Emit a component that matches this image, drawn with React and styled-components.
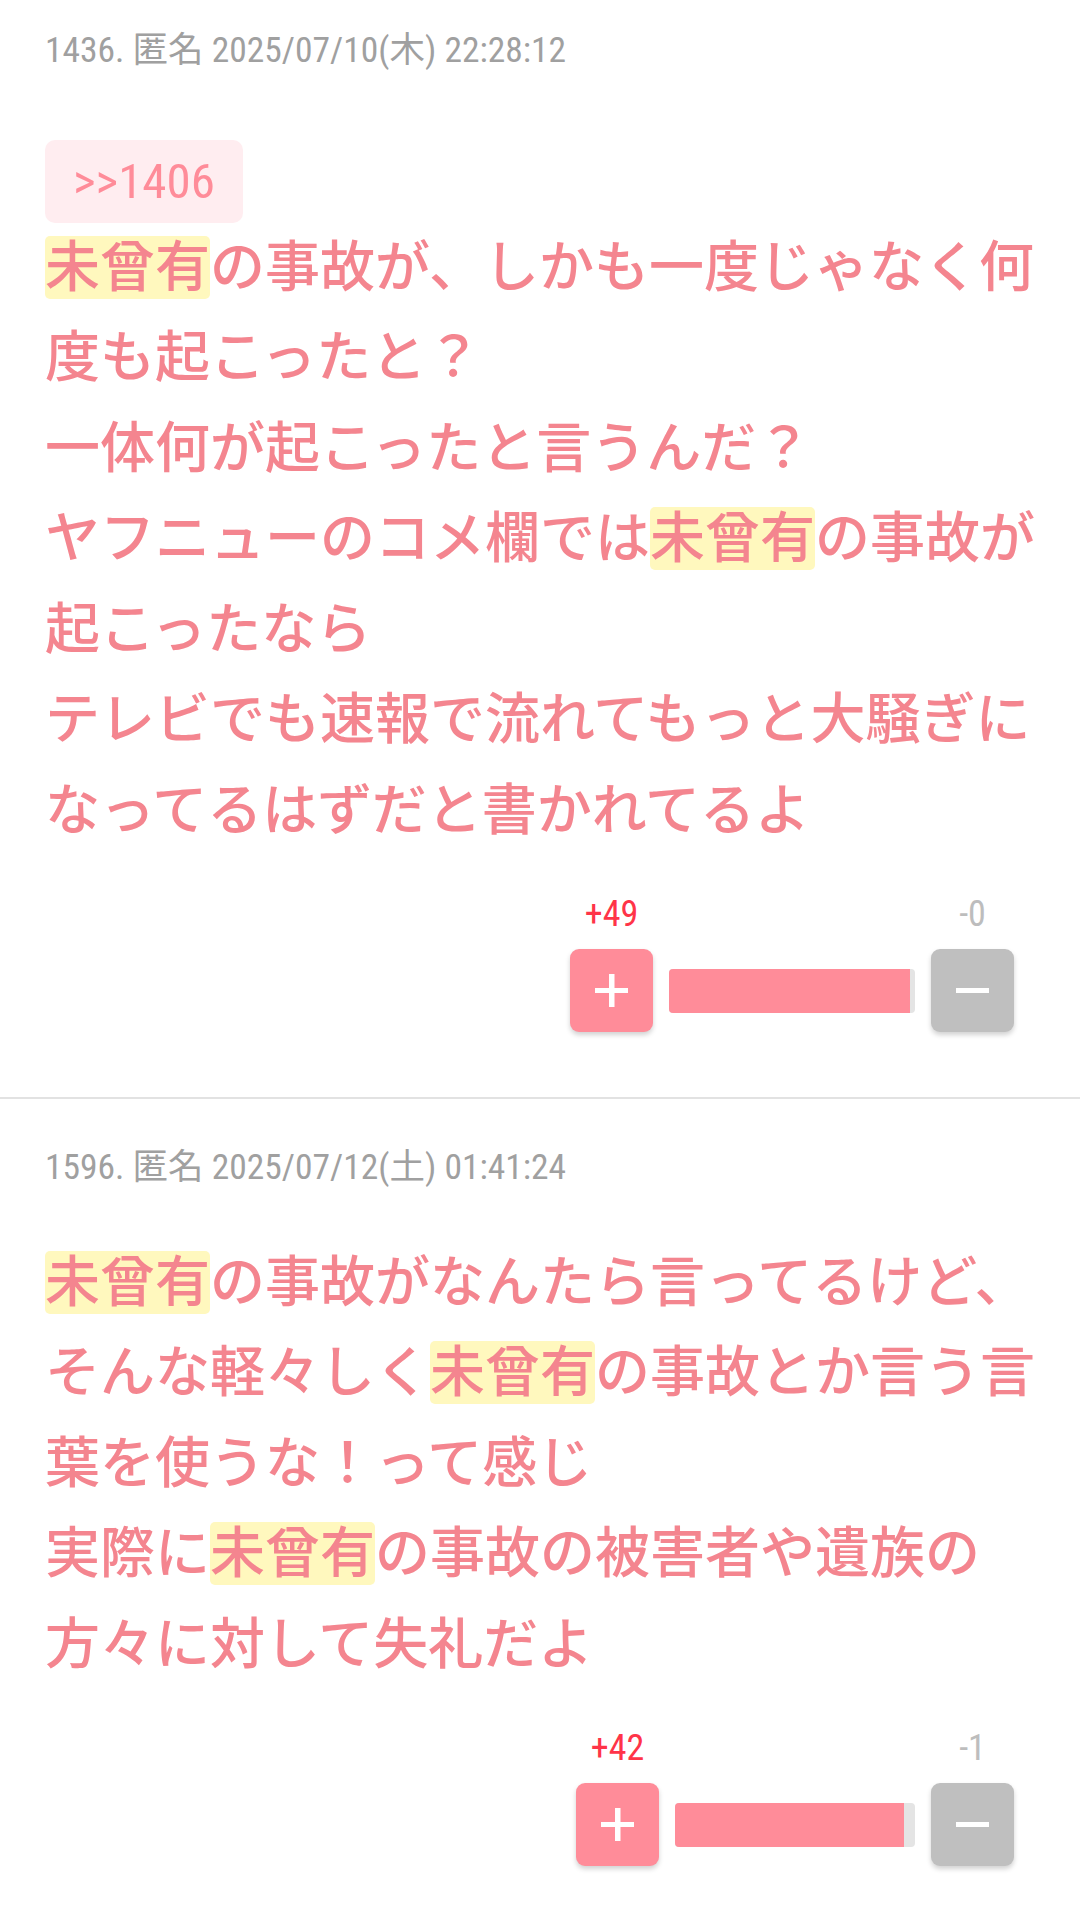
import React from "react";
import styled, { createGlobalStyle } from "styled-components";

const GlobalStyle = createGlobalStyle`
  html, body {
    margin: 0;
    padding: 0;
    background: #ffffff;
  }
  body {
    font-family: "Noto Sans CJK JP", "Noto Sans", sans-serif;
    -webkit-font-smoothing: antialiased;
  }
`;

// narrow latin face for numbers, CJK falls through to Noto
const NUM_FONT = `"Roboto Condensed", "DejaVu Sans Condensed", "Noto Sans CJK JP", sans-serif`;

const posts = [
  {
    no: 1436,
    date: "2025/07/10(木) 22:28:12",
    anchor: 1406,
    text:
      "未曾有の事故が、しかも一度じゃなく何度も起こったと？\n一体何が起こったと言うんだ？\nヤフニューのコメ欄では未曾有の事故が起こったなら\nテレビでも速報で流れてもっと大騒ぎになってるはずだと書かれてるよ",
    up: 49,
    down: 0,
    barWidth: 246,
  },
  {
    no: 1596,
    date: "2025/07/12(土) 01:41:24",
    text:
      "未曾有の事故がなんたら言ってるけど、そんな軽々しく未曾有の事故とか言う言葉を使うな！って感じ\n実際に未曾有の事故の被害者や遺族の方々に対して失礼だよ",
    up: 42,
    down: 1,
    barWidth: 240,
  },
];

const KEYWORD = "未曾有";

const Feed = styled.main`
  margin-top: -18px;
`;

const Post = styled.article`
  padding: 43.5px 35px 65px 45px;
  border-bottom: ${(p) => (p.$last ? "none" : "2px solid #e2e2e2")};
`;

const Meta = styled.div`
  font-family: ${NUM_FONT};
  font-size: 35.5px;
  line-height: 48px;
  color: #a0a0a0;
  margin-bottom: 41px;
  white-space: nowrap;
`;

const AnchorRow = styled.div`
  display: flex;
  height: 83px;
  margin: 66.5px 0 -6.5px;
`;

const Anchor = styled.a`
  display: inline-flex;
  align-items: center;
  height: 83px;
  padding: 0 28px;
  border-radius: 10px;
  background: #ffedf0;
  color: #ff8c99;
  font-family: ${NUM_FONT};
  font-size: 49px;
  text-decoration: none;
  box-sizing: border-box;
`;

const Body = styled.p`
  margin: 0;
  font-family: "Noto Sans CJK JP", sans-serif;
  font-weight: 500;
  font-size: 55px;
  line-height: 90.5px;
  color: #f4858f;
`;

const Mark = styled.span`
  display: inline-block;
  line-height: 52px;
  padding-bottom: 11px;
  border-radius: 5px;
  background: #fff8be;
`;

const Votes = styled.div`
  display: grid;
  grid-template-columns: 83px ${(p) => p.$barWidth}px 83px;
  grid-template-rows: 40px 83px;
  column-gap: 16px;
  row-gap: 15px;
  justify-content: end;
  margin: 44px 31px 0 0;
`;

const Count = styled.div`
  font-family: ${NUM_FONT};
  font-size: 36px;
  line-height: 40px;
  text-align: center;
  white-space: nowrap;
  color: ${(p) => (p.$up ? "#ff3448" : "#bdbdbd")};
  grid-row: 1;
  grid-column: ${(p) => (p.$up ? 1 : 3)};
`;

const VoteButton = styled.button`
  grid-row: 2;
  width: 83px;
  height: 83px;
  padding: 0;
  border: none;
  border-radius: 9px;
  display: flex;
  align-items: center;
  justify-content: center;
  background: ${(p) => (p.$up ? "#ff8c99" : "#bfbfbf")};
  box-shadow: 0 3px 5px rgba(0, 0, 0, 0.18);
  cursor: pointer;
`;

const Bar = styled.div`
  grid-row: 2;
  align-self: center;
  height: 44px;
  border-radius: 4px;
  background: #e4e4e4;
  overflow: hidden;
`;

const BarFill = styled.div`
  height: 100%;
  background: #ff8c99;
`;

const PlusIcon = () => (
  <svg width="33" height="33" viewBox="0 0 33 33" fill="#fff">
    <rect x="0" y="14" width="33" height="5" />
    <rect x="14" y="0" width="5.5" height="33" />
  </svg>
);

const MinusIcon = () => (
  <svg width="33" height="5" viewBox="0 0 33 5" fill="#fff">
    <rect x="0" y="0" width="33" height="5" />
  </svg>
);

function renderText(text) {
  const lines = text.split("\n");
  return lines.map((line, i) => {
    const parts = line.split(KEYWORD);
    return (
      <React.Fragment key={i}>
        {parts.map((part, j) => (
          <React.Fragment key={j}>
            {j > 0 && <Mark>{KEYWORD}</Mark>}
            {part}
          </React.Fragment>
        ))}
        {i < lines.length - 1 && <br />}
      </React.Fragment>
    );
  });
}

function VoteBox({ up, down, barWidth }) {
  // one extra vote on each side keeps a sliver of grey at 100%
  const pct = ((up + 1) / (up + down + 2)) * 100;
  return (
    <Votes $barWidth={barWidth}>
      <Count $up>+{up}</Count>
      <Count>-{down}</Count>
      <VoteButton $up aria-label="plus">
        <PlusIcon />
      </VoteButton>
      <Bar>
        <BarFill style={{ width: `${pct}%` }} />
      </Bar>
      <VoteButton aria-label="minus">
        <MinusIcon />
      </VoteButton>
    </Votes>
  );
}

export default function App() {
  return (
    <>
      <GlobalStyle />
      <Feed>
        {posts.map((post, i) => (
          <Post key={post.no} $last={i === posts.length - 1}>
            <Meta>
              {post.no}. 匿名 {post.date}
            </Meta>
            {post.anchor && (
              <AnchorRow>
                <Anchor href={`#${post.anchor}`}>&gt;&gt;{post.anchor}</Anchor>
              </AnchorRow>
            )}
            <Body>{renderText(post.text)}</Body>
            <VoteBox up={post.up} down={post.down} barWidth={post.barWidth} />
          </Post>
        ))}
      </Feed>
    </>
  );
}
